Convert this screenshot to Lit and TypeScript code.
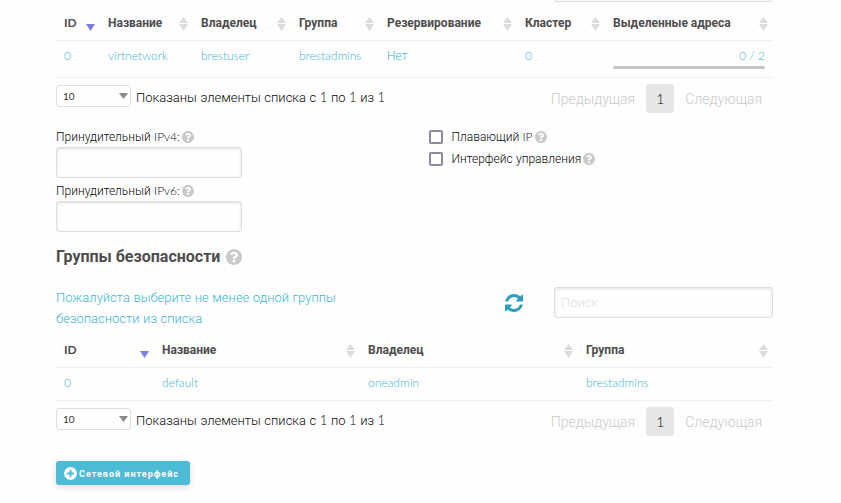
import { LitElement, html, css, svg, nothing } from "lit";
import { customElement, property } from "lit/decorators.js";
import { classMap } from "lit/directives/class-map.js";

interface Column {
  title: string;
  width: string;
}

/* Cyrillic words are set in Roboto, everything else stays in Lato. */
const mixed = (text: string) =>
  text
    .split(/([А-Яа-яЁё]+)/)
    .filter((part) => part)
    .map((part) => (/[А-Яа-яЁё]/.test(part) ? html`<span class="cyr">${part}</span>` : part));

const shared = css`
  * {
    box-sizing: border-box;
  }
  .cyr {
    font-family: Roboto, sans-serif;
  }
  .field {
    display: block;
    width: 100%;
    height: 31px;
    margin: 0;
    padding: 0 6px;
    border: 1px solid #dedede;
    border-radius: 3px;
    background: #fefefe;
    box-shadow: inset 0 1px 3px rgba(10, 10, 10, 0.12);
    color: #333;
    font: 300 13px Roboto, sans-serif;
  }
  .field::placeholder {
    color: #e2e2e2;
    opacity: 1;
  }
`;

@customElement("help-tip")
export class HelpTip extends LitElement {
  static styles = css`
    :host {
      display: inline-flex;
      width: 12px;
      height: 12px;
      color: #cacaca;
    }
    :host([large]) {
      width: 16px;
      height: 16px;
    }
    svg {
      width: 100%;
      height: 100%;
    }
  `;

  render() {
    return html`<svg viewBox="8 8 496 496" fill="currentColor" aria-hidden="true">
      <path d="M504 256c0 137-111 248-248 248S8 393 8 256 119 8 256 8s248 111 248 248zM262.700 90c-54.500 0-89.300 23-116.500 63.800-3.500 5.300-2.400 12.400 2.700 16.300l34.700 26.300c5.200 3.900 12.600 3 16.700-2.100 17.900-22.700 30.100-35.800 57.300-35.800 20.400 0 45.700 13.100 45.700 33 0 15-12.400 22.700-32.500 34C247.100 238.500 216 254.900 216 296v4c0 6.600 5.400 12 12 12h56c6.600 0 12-5.400 12-12v-1.300c0-28.500 83.200-29.600 83.200-106.700 0-58-60.200-102-116.500-102zM256 338c-25.400 0-46 20.600-46 46s20.600 46 46 46 46-20.600 46-46-20.600-46-46-46z" />
    </svg>`;
  }
}

@customElement("data-list")
export class DataList extends LitElement {
  static properties = {
    columns: { attribute: false },
    cells: { attribute: false },
    caption: { type: String },
  };

  declare columns: Column[];
  declare cells: unknown[];
  declare caption: string;

  static styles = [
    shared,
    css`
      :host {
        display: block;
      }
      table {
        width: 100%;
        table-layout: fixed;
        border-collapse: collapse;
      }
      th,
      td {
        padding: 7px 8px 9px;
        border-bottom: 1px solid #f0f0f0;
        text-align: left;
        vertical-align: top;
        white-space: nowrap;
        font-size: 12px;
        line-height: 16px;
      }
      th {
        padding: 13px 5px 9px 8px;
        color: #4d4d4d;
        font-weight: 700;
      }
      td {
        color: #3fb5d1;
        font-weight: 300;
      }
      .head {
        display: flex;
        justify-content: space-between;
        align-items: center;
      }
      .sort {
        flex: none;
        width: 9px;
        height: 16px;
        color: #dcdcdc;
      }
      .sort.active {
        color: #7a7fe0;
      }
      .foot {
        display: flex;
        align-items: flex-start;
        justify-content: space-between;
        padding-top: 6px;
      }
      .length {
        display: flex;
        align-items: center;
        gap: 5px;
        color: #0a0a0a;
        font-size: 13px;
        line-height: 26px;
      }
      .pick {
        display: flex;
        position: relative;
        align-self: flex-start;
        padding-top: 1px;
      }
      select {
        appearance: none;
        width: 75px;
        height: 22px;
        margin: 0;
        padding: 0 6px;
        border: 1px solid #dedede;
        border-radius: 3px;
        background: #fefefe;
        color: #333;
        font: 400 10px Lato, sans-serif;
      }
      .arrow {
        position: absolute;
        right: 3px;
        top: 9px;
        width: 9px;
        height: 6px;
        fill: #8a8a8a;
        pointer-events: none;
      }
      .pages {
        display: flex;
        color: #cacaca;
        font-size: 14px;
      }
      .pages button {
        height: 29px;
        margin: 0;
        padding: 0 11px;
        border: 0;
        border-radius: 3px;
        background: none;
        color: inherit;
        font: inherit;
      }
      .pages .current {
        padding: 0 10px;
        background: #e6e6e6;
        color: #0a0a0a;
      }
    `,
  ];

  render() {
    return html`
      <table aria-label=${this.caption}>
        <colgroup>
          ${this.columns.map((c) => html`<col style="width:${c.width}" />`)}
        </colgroup>
        <thead>
          <tr>
            ${this.columns.map(
              (c, i) => html`<th scope="col">
                <div class="head">
                  <span>${mixed(c.title)}</span>
                  <svg class=${classMap({ sort: true, active: i === 0 })} viewBox="0 0 9 16" fill="currentColor" aria-hidden="true">
                    ${i === 0 ? nothing : svg`<path d="M4.500 2 9 8H0z" />`}
                    <path d="M0 9h9l-4.500 7z" />
                  </svg>
                </div>
              </th>`
            )}
          </tr>
        </thead>
        <tbody>
          <tr>
            ${this.cells.map((c) => html`<td>${typeof c === "string" ? mixed(c) : c}</td>`)}
          </tr>
        </tbody>
      </table>
      <div class="foot">
        <div class="length">
          <span class="pick">
            <select aria-label="Количество элементов">
              <option>10</option>
              <option>25</option>
              <option>50</option>
            </select>
            <svg class="arrow" viewBox="0 0 9 6" aria-hidden="true"><path d="M0 0h9L4.500 6z" /></svg>
          </span>
          <span>${mixed("Показаны элементы списка с 1 по 1 из 1")}</span>
        </div>
        <nav class="pages">
          <button type="button">${mixed("Предыдущая")}</button>
          <button type="button" class="current">1</button>
          <button type="button">${mixed("Следующая")}</button>
        </nav>
      </div>
    `;
  }
}

@customElement("lease-bar")
export class LeaseBar extends LitElement {
  @property({ type: Number }) used = 0;
  @property({ type: Number }) total = 1;

  static styles = css`
    :host {
      display: block;
      text-align: right;
    }
    .track {
      height: 3px;
      margin: 2px 0 -1px;
      border-radius: 2px;
      background: #c6c6c6;
      overflow: hidden;
    }
    .fill {
      height: 100%;
      background: #4dbbd6;
    }
  `;

  render() {
    return html`${this.used} / ${this.total}
      <div class="track"><div class="fill" style="width:${(this.used / this.total) * 100}%"></div></div>`;
  }
}

@customElement("app-root")
export class AppRoot extends LitElement {
  static styles = [
    shared,
    css`
      :host {
        display: block;
        min-height: 100vh;
        padding: 0 68px 0 56px;
        box-sizing: border-box;
        overflow: hidden;
        background: #fefefe;
        color: #0a0a0a;
        font: 300 12px/16px Lato, Roboto, sans-serif;
      }
      .search {
        width: 219px;
      }
      .scrolled {
        margin: -29px 0 0 auto;
      }
      .options {
        display: grid;
        grid-template-columns: 1fr 1fr;
        gap: 28px;
        padding-top: 15px;
      }
      .address {
        display: block;
        width: 186px;
      }
      .caption {
        display: flex;
        align-items: center;
        gap: 2px;
        height: 18px;
        white-space: pre;
      }
      .address .field {
        margin-top: 1px;
      }
      .address + .address {
        margin-top: 4px;
      }
      .checks {
        display: flex;
        flex-direction: column;
        gap: 4px;
      }
      .check {
        display: flex;
        align-items: center;
        gap: 2px;
        height: 18px;
        white-space: pre;
      }
      .check input {
        appearance: none;
        width: 14px;
        height: 14px;
        margin: 0 7px 0 0;
        border: 2px solid #8e8a9f;
        border-radius: 2px;
        background: #fefefe;
      }
      h2 {
        display: flex;
        align-items: center;
        gap: 6px;
        margin: 13px 0 0;
        color: #4d4d4d;
        font-size: 16px;
        line-height: 22px;
      }
      .toolbar {
        display: flex;
        align-items: flex-start;
        padding: 19px 0 0;
        min-height: 60px;
      }
      .hint {
        flex: 1;
        margin: 0;
        color: #3fb5d1;
        font-size: 13px;
        line-height: 21px;
      }
      .measure {
        display: block;
        max-width: 290px;
      }
      .refresh {
        width: 18px;
        height: 18px;
        margin: 7px 31px 0 0;
        padding: 0;
        border: 0;
        background: none;
        color: #2f9cb8;
      }
      .refresh svg {
        display: block;
      }
      .add {
        display: flex;
        align-items: center;
        gap: 2px;
        height: 24px;
        margin: 25px 0 18px;
        padding: 0 11px 0 8px;
        border: 0;
        border-radius: 3px;
        background: #4dbbd6;
        box-shadow: 0 2px 6px rgba(10, 10, 10, 0.15);
        color: #fefefe;
        font: 700 9px Lato, Roboto, sans-serif;
        letter-spacing: 1px;
      }
    `,
  ];

  private networkColumns: Column[] = [
    { title: "ID", width: "44px" },
    { title: "Название", width: "93px" },
    { title: "Владелец", width: "98px" },
    { title: "Группа", width: "88px" },
    { title: "Резервирование", width: "138px" },
    { title: "Кластер", width: "88px" },
    { title: "Выделенные адреса", width: "auto" },
  ];

  private groupColumns: Column[] = [
    { title: "ID", width: "98px" },
    { title: "Название", width: "206px" },
    { title: "Владелец", width: "218px" },
    { title: "Группа", width: "auto" },
  ];

  private address(label: string) {
    return html`<label class="address">
      <span class="caption"><span>${mixed(label)}</span><help-tip></help-tip></span>
      <input class="field" type="text" />
    </label>`;
  }

  private check(label: string) {
    return html`<label class="check"><input type="checkbox" /><span>${mixed(label)}</span><help-tip></help-tip></label>`;
  }

  render() {
    return html`
      <input class="field search scrolled" type="search" aria-label="Поиск сети" />
      <data-list
        caption="Сети"
        .columns=${this.networkColumns}
        .cells=${["0", "virtnetwork", "brestuser", "brestadmins", "Нет", "0", html`<lease-bar used="0" total="2"></lease-bar>`]}
      ></data-list>

      <div class="options">
        <div>${this.address("Принудительный IPv4:")}${this.address("Принудительный IPv6:")}</div>
        <div class="checks">${this.check("Плавающий IP")}${this.check("Интерфейс управления")}</div>
      </div>

      <h2><span>${mixed("Группы безопасности")}</span><help-tip large></help-tip></h2>

      <div class="toolbar">
        <p class="hint">
          <span class="measure">${mixed("Пожалуйста выберите не менее одной группы безопасности из списка")}</span>
        </p>
        <button class="refresh" type="button" aria-label="Обновить">
          <svg width="18" height="18" viewBox="0 0 1536 1536" fill="currentColor" aria-hidden="true">
            <path d="M1511 928q0 5-1 7-64 268-268 434.500T764 1536q-146 0-282.500-55T238 1324l-129 129q-19 19-45 19t-45-19-19-45V960q0-26 19-45t45-19h448q26 0 45 19t19 45-19 45l-137 137q71 66 161 102t187 36q134 0 250-65t186-179q11-17 53-117 8-23 30-23h192q13 0 22.500 9.500t9.500 22.500zm25-800v448q0 26-19 45t-45 19h-448q-26 0-45-19t-19-45 19-45l138-138Q969 256 768 256q-134 0-250 65T332 500q-11 17-53 117-8 23-30 23H50q-13 0-22.500-9.500T18 608v-7q65-268 270-434.500T768 0q146 0 284 55.500T1297 212l130-129q19-19 45-19t45 19 19 45z" />
          </svg>
        </button>
        <input class="field search" type="search" placeholder="Поиск" aria-label="Поиск группы" />
      </div>
      <data-list
        caption="Группы безопасности"
        .columns=${this.groupColumns}
        .cells=${["0", "default", "oneadmin", "brestadmins"]}
      ></data-list>

      <button class="add" type="button">
        <svg width="13" height="13" viewBox="0 0 13 13" aria-hidden="true">
          <circle cx="6.500" cy="6.500" r="6.500" fill="#fefefe" />
          <path d="M6.500 3v7M3 6.500h7" stroke="#4dbbd6" stroke-width="2" />
        </svg>
        <span>${mixed("Сетевой интерфейс")}</span>
      </button>
    `;
  }
}
